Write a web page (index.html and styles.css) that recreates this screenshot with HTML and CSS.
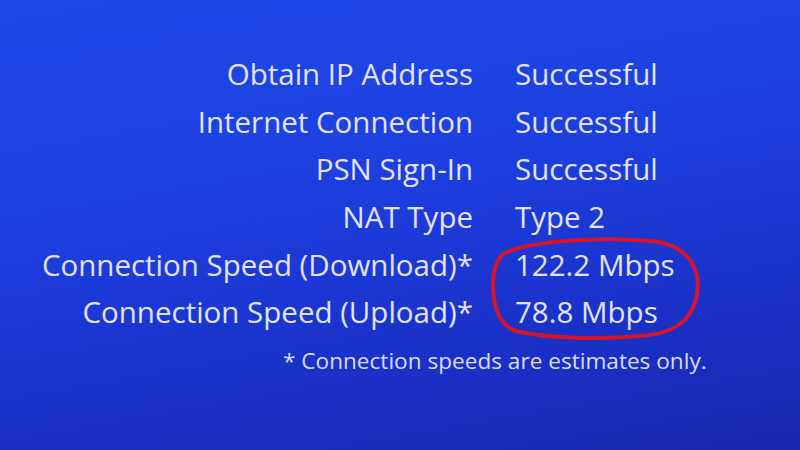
FILE: index.html
```html
<!DOCTYPE html>
<html lang="en">
<head>
    <meta charset="UTF-8">
    <meta name="viewport" content="width=device-width, initial-scale=1.0">
    <title>Test Internet Connection</title>
    <link rel="stylesheet" href="styles.css">
</head>
<body>
    <main class="screen">
        <section class="results">
            <div class="label">Obtain IP Address</div>
            <div class="value">Successful</div>

            <div class="label">Internet Connection</div>
            <div class="value">Successful</div>

            <div class="label">PSN Sign-In</div>
            <div class="value">Successful</div>

            <div class="label">NAT Type</div>
            <div class="value">Type 2</div>

            <div class="label">Connection Speed (Download)*</div>
            <div class="value">122.2 Mbps</div>

            <div class="label">Connection Speed (Upload)*</div>
            <div class="value">78.8 Mbps</div>
        </section>
        <p class="note">* Connection speeds are estimates only.</p>

        <!-- marker circled by hand on the photo -->
        <svg class="circle" width="220" height="110" viewBox="0 0 220 110">
            <path d="M14 18 C40 4 120 0 170 6 C200 12 212 34 208 58 C204 84 186 98 150 100 C110 104 50 102 24 94 C8 86 4 66 4 48 C4 34 8 24 14 18 Z"
                  fill="none" stroke="#d4142a" stroke-width="4" stroke-linejoin="round"/>
        </svg>
    </main>
</body>
</html>
```

FILE: styles.css
```css
body {
    margin: 0;
    padding: 0;
    font-family: "Open Sans", "Noto Sans", sans-serif;
    color: #e0e3fa;
}
.screen {
    position: relative;
    width: 800px;
    height: 450px;
    overflow: hidden;
    background: linear-gradient(170deg, #2049e8 0%, #1d3fe0 40%, #1a30c6 75%, #1826ae 100%);
}
.results {
    display: grid;
    grid-template-columns: 473px auto;
    grid-auto-rows: 47.6px;
    column-gap: 42px;
    padding-top: 50px;
    font-size: 29.5px;
    align-items: center;
}
.label {
    text-align: right;
    white-space: nowrap;
}
.value {
    white-space: nowrap;
}
.note {
    margin: 0;
    padding: 9px 0 0 283px;
    font-size: 22.6px;
    color: #d8dcf6;
}
.circle {
    position: absolute;
    left: 489px;
    top: 236px;
}
```
